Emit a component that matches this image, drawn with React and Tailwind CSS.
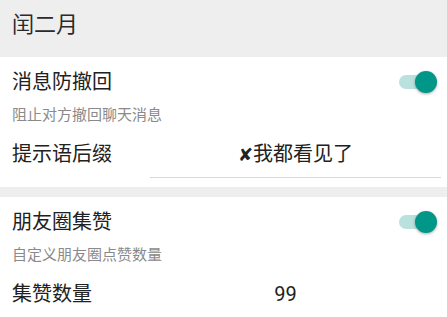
const FONT = "font-['Roboto','Noto_Sans_CJK_SC',sans-serif]";

function Toggle() {
  return (
    <div className="relative h-[22px] w-[38px] shrink-0">
      <div className="absolute left-0 top-[4px] h-[14px] w-[36px] rounded-full bg-[#b9e2de]" />
      <div className="absolute right-0 top-0 h-[22px] w-[22px] rounded-full bg-[#009688] shadow-[0_1px_3px_rgba(0,0,0,0.35)]" />
    </div>
  );
}

function Section({ title, desc, label, value }) {
  return (
    <div className="bg-white pb-[9px] pl-[12px] pt-[10px]">
      <div className="flex h-[30px] items-center justify-between pr-[10px]">
        <span className="text-[20px] leading-[30px] text-[#212121]">{title}</span>
        <Toggle />
      </div>
      <div className="mt-[8px] text-[15px] leading-[20px] text-[#8a8a8a]">{desc}</div>
      <div className="mt-[14px] flex items-start pr-[6px]">
        <span className="text-[20px] leading-[30px] text-[#212121]">{label}</span>
        <div className="ml-[38px] h-[39px] flex-1 border-b border-[#d9d9d9] text-center text-[20px] leading-[30px] text-[#212121]">
          {value}
        </div>
      </div>
    </div>
  );
}

export default function App() {
  return (
    <div className={`${FONT} w-[447px] bg-[#eeeeee]`}>
      <div className="flex h-[57px] items-start px-[12px] pt-[9px]">
        <span className="text-[22px] leading-[32px] text-[#2a2a2a]">闰二月</span>
      </div>
      <Section
        title="消息防撤回"
        desc="阻止对方撤回聊天消息"
        label="提示语后缀"
        value={
          <>
            <span className="font-['DejaVu_Sans',sans-serif] text-[18px] font-bold">✘</span>我都看见了
          </>
        }
      />
      <div className="h-[10px]" />
      <Section title="朋友圈集赞" desc="自定义朋友圈点赞数量" label="集赞数量" value="99" />
    </div>
  );
}
